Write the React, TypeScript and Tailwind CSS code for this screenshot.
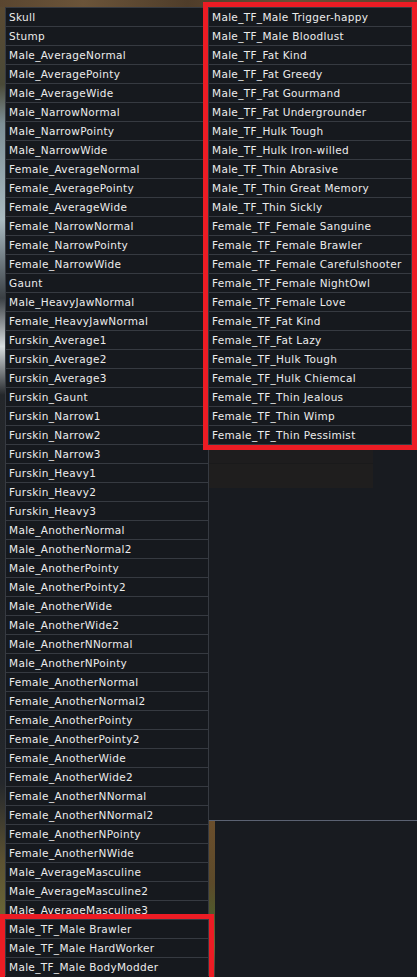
import React from "react";

const leftItems = [
  "Skull",
  "Stump",
  "Male_AverageNormal",
  "Male_AveragePointy",
  "Male_AverageWide",
  "Male_NarrowNormal",
  "Male_NarrowPointy",
  "Male_NarrowWide",
  "Female_AverageNormal",
  "Female_AveragePointy",
  "Female_AverageWide",
  "Female_NarrowNormal",
  "Female_NarrowPointy",
  "Female_NarrowWide",
  "Gaunt",
  "Male_HeavyJawNormal",
  "Female_HeavyJawNormal",
  "Furskin_Average1",
  "Furskin_Average2",
  "Furskin_Average3",
  "Furskin_Gaunt",
  "Furskin_Narrow1",
  "Furskin_Narrow2",
  "Furskin_Narrow3",
  "Furskin_Heavy1",
  "Furskin_Heavy2",
  "Furskin_Heavy3",
  "Male_AnotherNormal",
  "Male_AnotherNormal2",
  "Male_AnotherPointy",
  "Male_AnotherPointy2",
  "Male_AnotherWide",
  "Male_AnotherWide2",
  "Male_AnotherNNormal",
  "Male_AnotherNPointy",
  "Female_AnotherNormal",
  "Female_AnotherNormal2",
  "Female_AnotherPointy",
  "Female_AnotherPointy2",
  "Female_AnotherWide",
  "Female_AnotherWide2",
  "Female_AnotherNNormal",
  "Female_AnotherNNormal2",
  "Female_AnotherNPointy",
  "Female_AnotherNWide",
  "Male_AverageMasculine",
  "Male_AverageMasculine2",
  "Male_AverageMasculine3",
  "Male_TF_Male Brawler",
  "Male_TF_Male HardWorker",
  "Male_TF_Male BodyModder",
];

const rightItems = [
  "Male_TF_Male Trigger-happy",
  "Male_TF_Male Bloodlust",
  "Male_TF_Fat Kind",
  "Male_TF_Fat Greedy",
  "Male_TF_Fat Gourmand",
  "Male_TF_Fat Undergrounder",
  "Male_TF_Hulk Tough",
  "Male_TF_Hulk Iron-willed",
  "Male_TF_Thin Abrasive",
  "Male_TF_Thin Great Memory",
  "Male_TF_Thin Sickly",
  "Female_TF_Female Sanguine",
  "Female_TF_Female Brawler",
  "Female_TF_Female Carefulshooter",
  "Female_TF_Female NightOwl",
  "Female_TF_Female Love",
  "Female_TF_Fat Kind",
  "Female_TF_Fat Lazy",
  "Female_TF_Hulk Tough",
  "Female_TF_Hulk Chiemcal",
  "Female_TF_Thin Jealous",
  "Female_TF_Thin Wimp",
  "Female_TF_Thin Pessimist",
];

function Row({ label }: { label: string }) {
  return (
    <div className="h-[19px] border-t border-[#363a41] bg-[#16191e] pl-[3px] flex items-center text-[10.5px] leading-none text-[#ececec] whitespace-nowrap tracking-[0.32px]">
      {label}
    </div>
  );
}

export default function App() {
  return (
    <div
      className="relative w-[417px] h-[977px] overflow-hidden bg-[#181b20] flex flex-col"
      style={{ fontFamily: '"DejaVu Sans", "Liberation Sans", sans-serif' }}
    >
      {/* game world strip at top */}
      <div className="h-[7px] w-full bg-[linear-gradient(90deg,#5a4630,#6b5439_20%,#4f3d2a_45%,#6a5036_70%,#5e3f2b)]" />

      <div className="flex flex-1">
        {/* game world strip at left */}
        <div className="w-[5px] bg-[linear-gradient(180deg,#5a4a32_0%,#4a4a38_8%,#7d8f96_12%,#aabbc2_22%,#3a3f44_30%,#d8dde0_35%,#24272b_40%,#1f2226_60%,#25282c_80%,#5c5232_88%,#6b6a38_95%,#4d4228_100%)]" />

        {/* main list */}
        <div className="w-[204px] flex flex-col border-x border-[#363a41] self-start">
          {leftItems.map((l) => (
            <Row key={l} label={l} />
          ))}
        </div>

        {/* right side panel */}
        <div className="flex-1 flex flex-col">
          <div className="h-[442px]" />
          <div className="w-[164px] h-[15px] bg-[#1e1d1e] border-b border-[#1a1a1b]" />
          <div className="w-[164px] h-[24px] bg-[#1f1e1e]" />
          <div className="flex-1" />
          <div className="h-[157px] border-t border-[#5b6272] flex">
            <div className="w-[6px] bg-[linear-gradient(180deg,#6a4e2c_0%,#5c4a2a_40%,#4f5a2c_60%,#6a6638_80%,#3c3c38_100%)]" />
            <div className="flex-1" />
          </div>
        </div>
      </div>

      {/* sub-menu highlighted */}
      <div className="absolute left-[203px] top-[2px] w-[214px] border-[5px] border-[#ec1c24]">
        <div className="flex flex-col border-x border-b border-[#363a41]">
          {rightItems.map((l) => (
            <Row key={l} label={l} />
          ))}
        </div>
      </div>

      {/* bottom highlight */}
      <div className="absolute left-0 top-[914px] w-[214px] h-[80px] border-[5px] border-[#ec1c24] pointer-events-none" />
    </div>
  );
}
